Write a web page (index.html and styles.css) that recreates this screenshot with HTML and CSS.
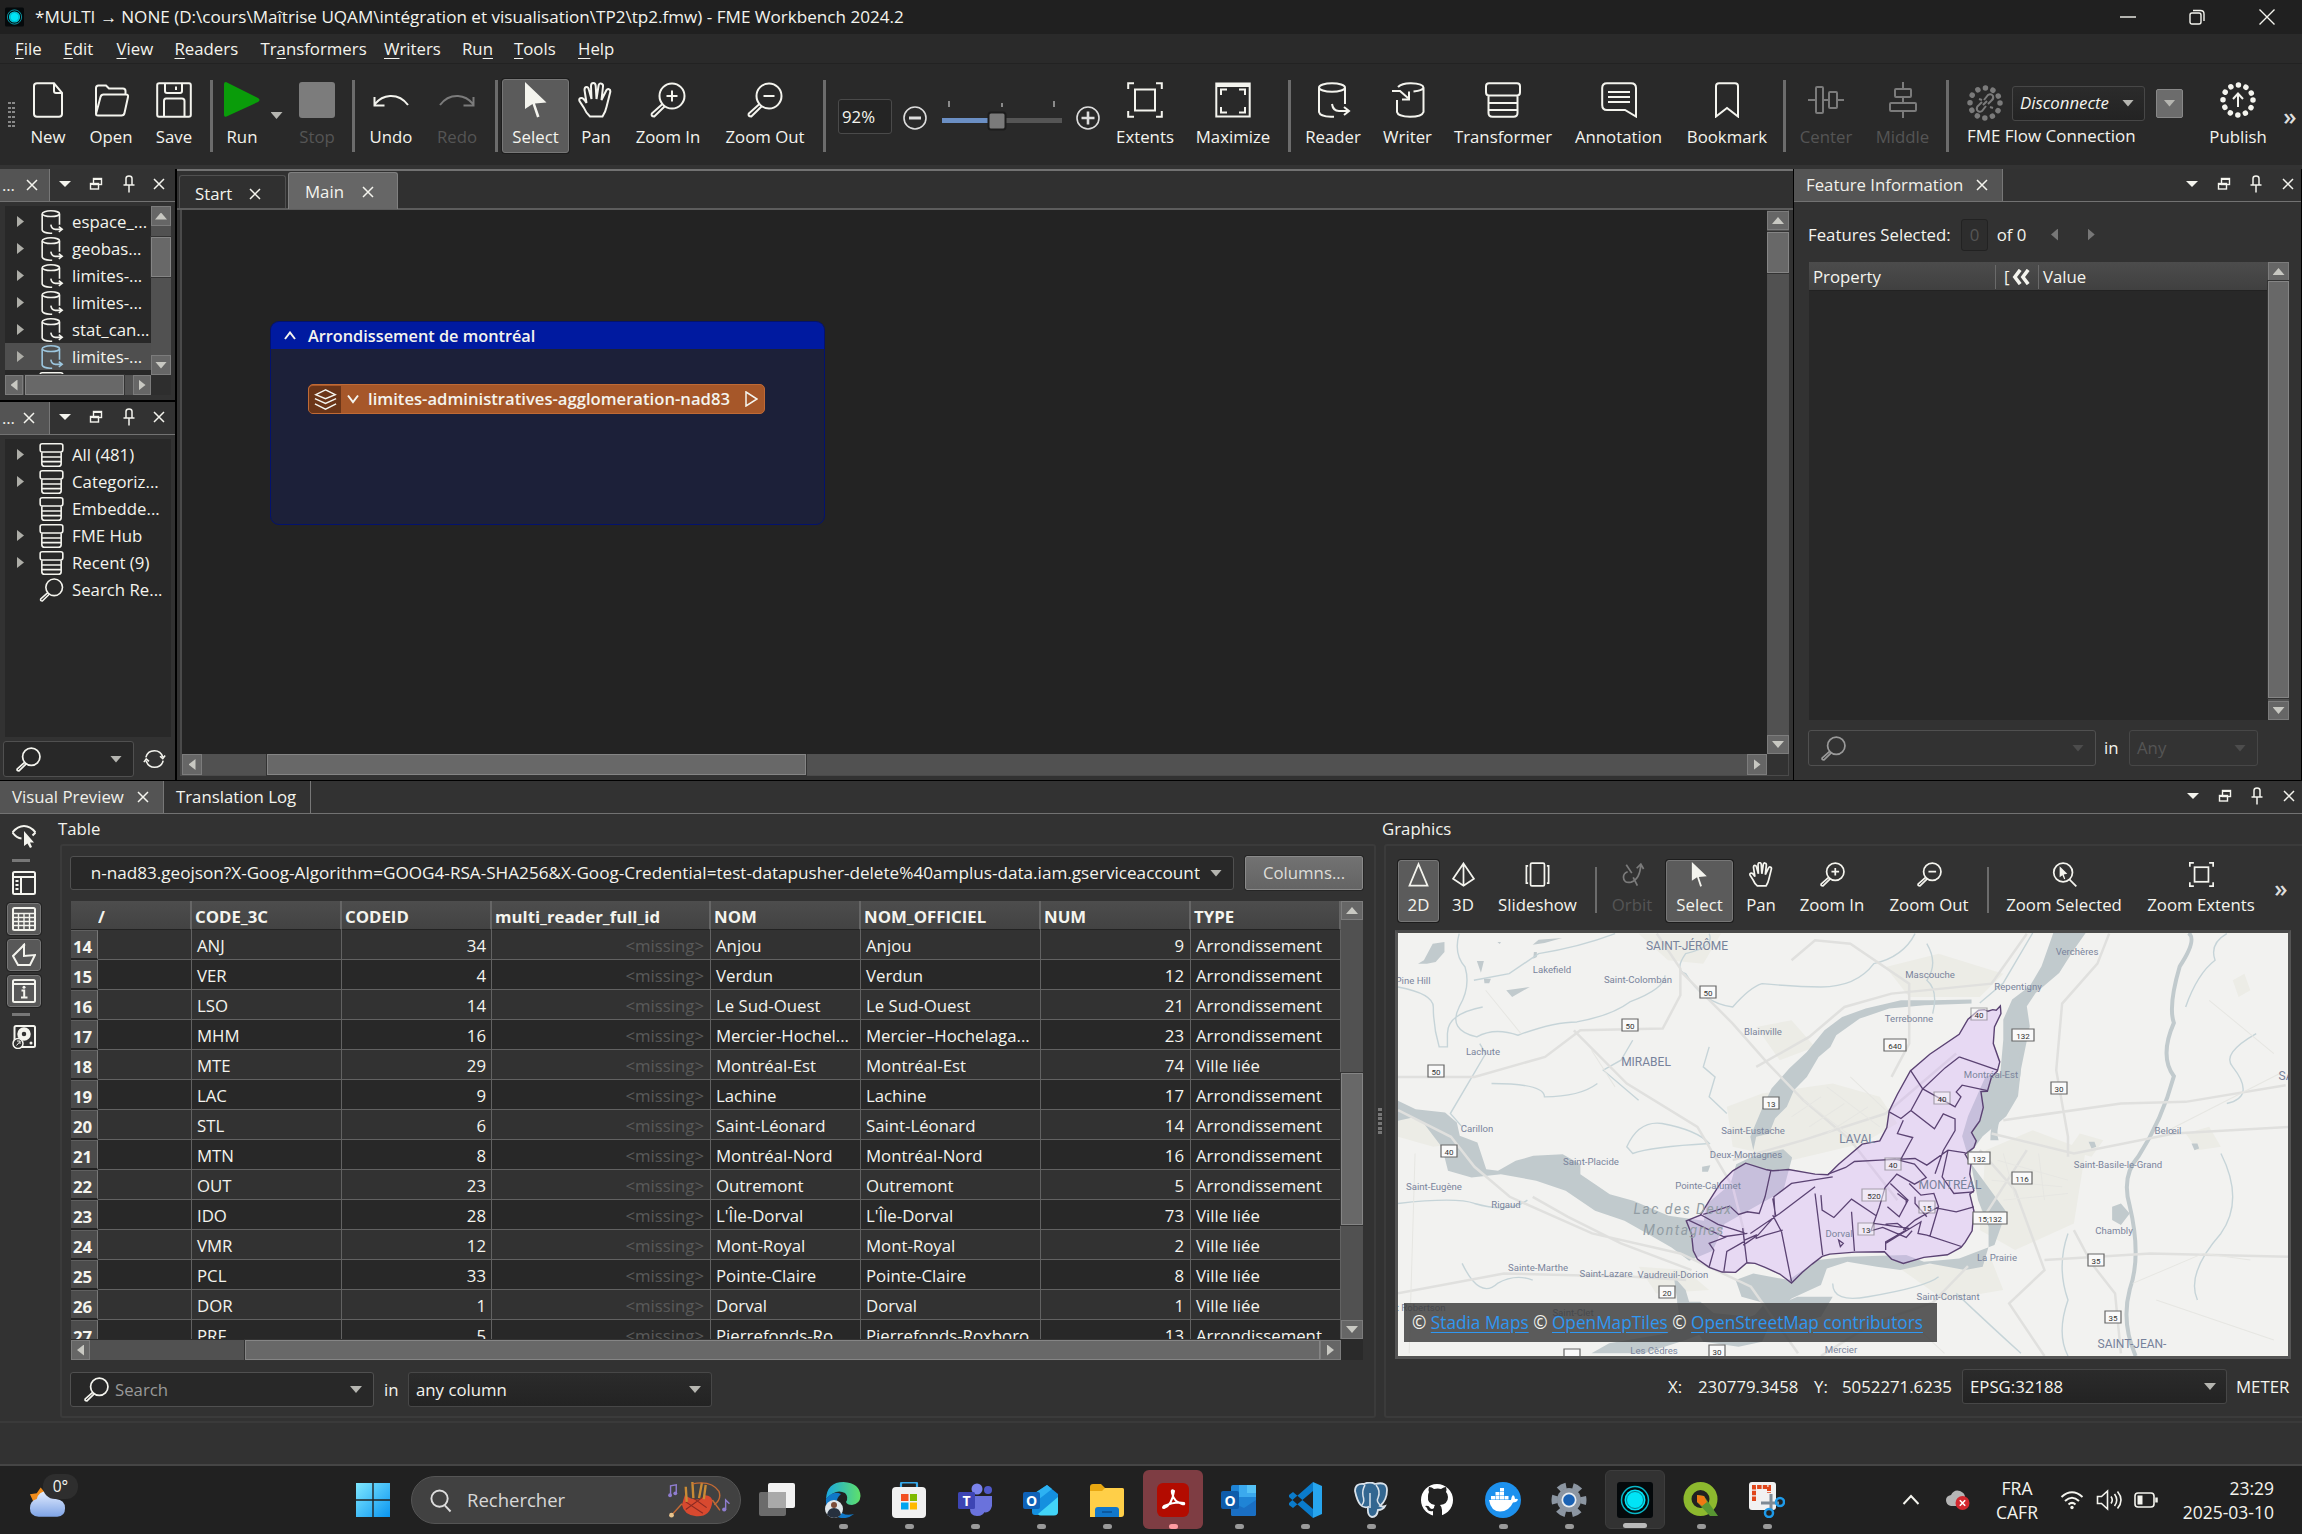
FILE: index.html
```html
<!DOCTYPE html>
<html lang="fr">
<head>
<meta charset="utf-8">
<title>FME Workbench</title>
<link rel="stylesheet" href="styles.css">
</head>
<body>
<svg class="defs" width="0" height="0">
  <defs>
  <symbol id="new" viewBox="0 0 36 36"><path d="M7 1.300h17l8 9.500V32q0 2.700-3 2.700H7q-3 0-3-2.700V4q0-2.700 3-2.700zM24 1.300V9q0 2 2 2h6"/></symbol>
  <symbol id="open" viewBox="0 0 36 36"><path d="M3 32V6q0-2.500 2.500-2.500H13l3 3h14q2.500 0 2.500 2.500v3M3 32l4.500-17q.7-2.500 3-2.500H33q2.500 0 2 2.500l-3.500 16q-.5 2.500-3 2.500H5Q3 33.500 3 32z"/></symbol>
  <symbol id="save" viewBox="0 0 36 36"><path d="M1.200 3q0-1.800 2-1.800H33q1.800 0 1.800 2V33q0 1.800-2 1.800H3q-1.800 0-1.800-2zM9 1.500V9q0 2 2 2h13q2 0 2-2V1.500M8 34V19q0-2.500 2-2.500h16q2.500 0 2.500 2.500v15M20 4.500V8"/></symbol>
  <symbol id="undo" viewBox="0 0 36 36"><path d="M35 23Q28 13.500 17 14 8 14.500 2 22M1.500 15v8.500h10"/></symbol>
  <symbol id="redo" viewBox="0 0 36 36"><path d="M1 23Q8 13.500 19 14q9 .5 15 8M34.500 15v8.500h-10"/></symbol>
  <symbol id="cursor" viewBox="0 0 36 36"><path class="solid" d="M7 0v27l7.500-5 4.500 13.500 2.500-1L17 21.500l11.500-1z"/></symbol>
  <symbol id="hand" viewBox="0 0 36 36"><path d="M12 34.500Q8 31 6 26L1.500 19q-1-3 2-3 2 0 5 5L6.500 8q0-3 2-3 2 0 2.500 3l2.500 9L13 4q0-3 2.300-3 2.300 0 2.400 3l.8 13L20.500 4q.5-3 2.500-2.500 2.300.5 2 3L23.500 18l4.500-9q1-2.500 3-1.700 2 .7 1 3.700L28.500 25q-1 5-4 9.500z"/></symbol>
  <symbol id="lens" viewBox="0 0 36 36"><circle cx="22" cy="14" r="12.500"/><path d="M12.500 22L1.800 31.500q-1 3 2.500 3L15 24"/></symbol>
  <symbol id="zin" viewBox="0 0 36 36"><circle cx="22" cy="14" r="12.500"/><path d="M12.500 22L1.800 31.500q-1 3 2.500 3L15 24M22 8.500v11M16.500 14h11"/></symbol>
  <symbol id="zout" viewBox="0 0 36 36"><circle cx="22" cy="14" r="12.500"/><path d="M12.500 22L1.800 31.500q-1 3 2.500 3L15 24M16.500 14h11"/></symbol>
  <symbol id="zsel" viewBox="0 0 36 36"><circle cx="16" cy="15" r="13.500"/><path d="M25 25l10 10"/><path class="solid" d="M11 6v16l4-3 2.500 6 1.500-.8L17 18l5-1z"/></symbol>
  <symbol id="extents" viewBox="0 0 36 36"><rect x="8" y="7.500" width="20" height="21"/><path d="M1.200 7V1.200H7M29 1.200h5.800V7M34.800 29v5.800H29M7 34.800H1.200V29"/></symbol>
  <symbol id="maximize" viewBox="0 0 36 36"><rect x="1.300" y="1.500" width="33.400" height="33"/><path d="M1 3h34" stroke-width="4"/><path d="M6 13V7.500h6M24 7.500h6V13M30 25v5.500h-6M12 30.500H6V25"/></symbol>
  <symbol id="reader" viewBox="0 0 36 36"><ellipse cx="17" cy="5.500" rx="13" ry="4.300"/><path d="M4 6v24q1 4.500 12 4.800h3M30 6v16M17 22q1 7 7 7h9M29 25l5 4-5 4"/></symbol>
  <symbol id="writer" viewBox="0 0 36 36"><path d="M8 5q4-4 13-3.800 12 .3 12.500 4.300-.5 3-10 4M7 18v12q1 4.500 13 4.800 12 0 13.500-4.800V6M2 9h8l8 7M12 17.500h7V9.500"/></symbol>
  <symbol id="transformer" viewBox="0 0 36 36"><path d="M4 1.200h28q3 0 3 3v6q0 3.300-3 3.300H4q-3 0-3-3.300v-6q0-3 3-3zM3.500 14v17q0 3.800 4 3.800h21q4 0 4-3.800V14M3.500 21h29M3.500 28h29"/></symbol>
  <symbol id="annotation" viewBox="0 0 36 36"><path d="M35 34.500V6q0-4.800-5-4.800H6Q1.200 1.200 1.200 6v17Q1.200 28 6 28h18zM7 10h22M7 15h22M7 20h22"/></symbol>
  <symbol id="bookmark" viewBox="0 0 36 36"><path d="M7 34.500V4q0-2.800 3-2.800h16q3 0 3 2.800v30.500l-11-8.500z"/></symbol>
  <symbol id="center" viewBox="0 0 36 36"><rect x="8" y="5" width="7" height="26" rx="1"/><rect x="21" y="10" width="8" height="16" rx="1"/><path d="M0 18h8M15 18h6M29 18h7"/></symbol>
  <symbol id="middle" viewBox="0 0 36 36"><rect x="10" y="7" width="16" height="8" rx="1"/><rect x="5" y="21" width="26" height="8" rx="1"/><path d="M18 0v7M18 15v6M18 29v7"/></symbol>
  <symbol id="ring" viewBox="0 0 36 36"><circle cx="18" cy="18" r="15" stroke-width="5.500" stroke-linecap="round" stroke-dasharray="0.010 7.844"/></symbol>
  <symbol id="x" viewBox="0 0 12 12"><path d="M1 1l10 10M11 1L1 11"/></symbol>
  <symbol id="restore" viewBox="0 0 14 14"><rect x="4.500" y="1.500" width="8" height="6"/><rect x="1.500" y="6.500" width="8" height="5.500"/><path d="M4.500 2h8.500M1.500 7h8.500" stroke-width="2"/></symbol>
  <symbol id="pin" viewBox="0 0 12 18"><path d="M3 9.500V3.500q0-2.500 3-2.500t3 2.500v6M0.500 10h11M6 10v7.500"/></symbol>
  <symbol id="two" viewBox="0 0 36 36"><path d="M18 3l13 31H5z"/></symbol>
  <symbol id="three" viewBox="0 0 36 36"><path d="M18 2l15 22-15 10L3 24zM18 2v32"/></symbol>
  <symbol id="slides" viewBox="0 0 36 36"><rect x="8" y="1.500" width="20" height="33" rx="2"/><path d="M4.500 5.500H2v25h2.500M31.500 5.500H34v25h-2.500"/></symbol>
  <symbol id="orbit" viewBox="0 0 36 36"><path d="M30 3q-1 22-14 26Q5 31 5 22q0-6 6-8M24 9l6-6 4 7M9 4l8 12M19 22l6 12"/></symbol>
  <symbol id="refresh" viewBox="0 0 28 28"><path d="M3 12q2-8.500 11-8.500 8 0 10.500 8M25 16q-2 8.500-11 8.500-8 0-10.500-8M21 10.500l3.500 3 3-4M.5 18l3-4 3.500 3"/></symbol>
  <symbol id="fme" viewBox="0 0 36 36"><rect width="36" height="36" rx="3" fill="#05090b"/><circle cx="18" cy="18" r="10.500" fill="#00e4f6"/><circle cx="18" cy="18" r="13.500" fill="none" stroke="#0ab6c6" stroke-width="1.500"/><circle cx="18" cy="18" r="8.500" fill="none" stroke="#067e8c" stroke-width="1"/></symbol>
  <linearGradient id="winb" x2="1" y2="1"><stop offset="0" stop-color="#7fe8ff"/><stop offset="1" stop-color="#0a95f0"/></linearGradient>
  <linearGradient id="edgeg" x2="1"><stop offset="0" stop-color="#1aa7e0"/><stop offset="1" stop-color="#5fe06a"/></linearGradient>
  <linearGradient id="cloudg" x2="0" y2="1"><stop offset="0" stop-color="#e3edff"/><stop offset="1" stop-color="#7fa4e6"/></linearGradient>
  </defs>
</svg>

<header class="title"><svg class="i18"><use href="#fme"/></svg><span>*MULTI → NONE (D:\cours\Maîtrise UQAM\intégration et visualisation\TP2\tp2.fmw) - FME Workbench 2024.2</span>
  <div class="winctl">
    <svg viewBox="0 0 16 16"><path d="M0 8h16"/></svg>
    <svg viewBox="0 0 16 16"><rect x="1" y="4" width="11" height="11" rx="2"/><path d="M4 1.500h7.500Q15 1.500 15 5v7"/></svg>
    <svg viewBox="0 0 16 16"><path d="M.5.5l15 15M15.500.5l-15 15"/></svg>
  </div>
</header>
<nav class="menu"><span><u>F</u>ile</span><span><u>E</u>dit</span><span><u>V</u>iew</span><span><u>R</u>eaders</span><span>Tr<u>a</u>nsformers</span><span><u>W</u>riters</span><span>Ru<u>n</u></span><span><u>T</u>ools</span><span><u>H</u>elp</span></nav>

<div class="toolbar">
  <div class="grip"></div>
  <div class="tool"><svg><use href="#new"/></svg>New</div>
  <div class="tool"><svg><use href="#open"/></svg>Open</div>
  <div class="tool"><svg><use href="#save"/></svg>Save</div>
  <i class="sep"></i>
  <div class="tool"><svg viewBox="0 0 36 36"><path class="run" d="M2 0Q0 0 0 2v31q0 2.500 2.500 1.500L34 20q3-2 0-4z"/></svg>Run</div>
  <i class="drop run-drop"></i>
  <div class="tool off"><b class="stop"></b>Stop</div>
  <i class="sep"></i>
  <div class="tool"><svg><use href="#undo"/></svg>Undo</div>
  <div class="tool off"><svg><use href="#redo"/></svg>Redo</div>
  <i class="sep"></i>
  <div class="tool on"><svg><use href="#cursor"/></svg>Select</div>
  <div class="tool"><svg><use href="#hand"/></svg>Pan</div>
  <div class="tool"><svg><use href="#zin"/></svg>Zoom In</div>
  <div class="tool"><svg><use href="#zout"/></svg>Zoom Out</div>
  <i class="sep"></i>
  <div class="pct">92%</div>
  <svg class="pm" viewBox="0 0 24 24"><circle cx="12" cy="12" r="11"/><path d="M6 12h12" stroke-width="3"/></svg>
  <svg class="slider" viewBox="0 0 130 40"><path d="M12 4v6M65 6v4M117 4v6" stroke="#aaa" stroke-width="1.500"/><rect x="5" y="21" width="50" height="5" fill="#6b8fc4"/><rect x="55" y="21" width="70" height="5" fill="#555"/><rect x="51.500" y="15.500" width="17" height="17" rx="2.500" fill="#7a7a7a" stroke="#1c1c1c"/></svg>
  <svg class="pm" viewBox="0 0 24 24"><circle cx="12" cy="12" r="11"/><path d="M5.500 12h13M12 5.500v13" stroke-width="2.600"/></svg>
  <div class="tool"><svg><use href="#extents"/></svg>Extents</div>
  <div class="tool"><svg><use href="#maximize"/></svg>Maximize</div>
  <i class="sep"></i>
  <div class="tool"><svg><use href="#reader"/></svg>Reader</div>
  <div class="tool"><svg><use href="#writer"/></svg>Writer</div>
  <div class="tool"><svg><use href="#transformer"/></svg>Transformer</div>
  <div class="tool"><svg><use href="#annotation"/></svg>Annotation</div>
  <div class="tool"><svg><use href="#bookmark"/></svg>Bookmark</div>
  <i class="sep"></i>
  <div class="tool off"><svg><use href="#center"/></svg>Center</div>
  <div class="tool off"><svg><use href="#middle"/></svg>Middle</div>
  <i class="sep"></i>
  <div class="flow">
    <div class="flow-row"><svg class="flow-ico" viewBox="0 0 36 36"><use href="#ring"/><path d="M17 15l4-5q3-2 5 1 1 3-2 5l-3 3M19 21l-4 5q-3 2-5-1-1-3 2-5l3-3M12 14l3 1M23 22l3 1M16 20l4-4"/></svg>
      <div class="combo flow-combo"><em>Disconnecte</em><i class="drop"></i></div><div class="flow-btn"><i class="drop"></i></div></div>
    <span>FME Flow Connection</span>
  </div>
  <div class="tool"><svg viewBox="0 0 36 36"><use href="#ring"/><path d="M18 25V12M13 17l5-5.500 5 5.500"/></svg>Publish</div>
  <div class="more">»</div>
</div>

<main class="work">
  <aside class="left">
    <section class="dock one">
      <div class="dockbar"><div class="dtab"><span>...</span><svg class="x"><use href="#x"/></svg></div><div class="acts"><i class="drop"></i><svg class="r"><use href="#restore"/></svg><svg class="p"><use href="#pin"/></svg><svg class="x"><use href="#x"/></svg></div></div>
      <div class="treebox">
        <div class="tree">
          <div><i class="exp"></i><svg><use href="#reader"/></svg>espace_...</div>
          <div><i class="exp"></i><svg><use href="#reader"/></svg>geobas...</div>
          <div><i class="exp"></i><svg><use href="#reader"/></svg>limites-...</div>
          <div><i class="exp"></i><svg><use href="#reader"/></svg>limites-...</div>
          <div><i class="exp"></i><svg><use href="#reader"/></svg>stat_can...</div>
          <div class="sel"><i class="exp"></i><svg><use href="#reader"/></svg>limites-...</div>
          <div><i></i><svg><use href="#transformer"/></svg></div>
        </div>
        <div class="vsb s1"><b class="up"></b><s></s><b class="down"></b></div>
        <div class="hsb h1"><b class="lt"></b><s></s><b class="rt"></b></div>
      </div>
    </section>
    <section class="dock two">
      <div class="dockbar"><div class="dtab"><span>...</span><svg class="x"><use href="#x"/></svg></div><div class="acts"><i class="drop"></i><svg class="r"><use href="#restore"/></svg><svg class="p"><use href="#pin"/></svg><svg class="x"><use href="#x"/></svg></div></div>
      <div class="tree gallery">
        <div><i class="exp"></i><svg><use href="#transformer"/></svg>All (481)</div>
        <div><i class="exp"></i><svg><use href="#transformer"/></svg>Categoriz...</div>
        <div><i></i><svg><use href="#transformer"/></svg>Embedde...</div>
        <div><i class="exp"></i><svg><use href="#transformer"/></svg>FME Hub</div>
        <div><i class="exp"></i><svg><use href="#transformer"/></svg>Recent (9)</div>
        <div><i></i><svg><use href="#lens"/></svg>Search Re...</div>
      </div>
      <div class="gsearch"><div class="field"><svg class="mag"><use href="#lens"/></svg><i class="drop"></i></div><svg class="ref"><use href="#refresh"/></svg></div>
    </section>
  </aside>
  <section class="mid">
    <div class="tabs"><div class="tab start">Start<svg class="x"><use href="#x"/></svg></div><div class="tab cur">Main<svg class="x"><use href="#x"/></svg></div></div>
    <div class="cwrap">
      <div class="canvas">
        <div class="bm"><div class="bmh"><svg viewBox="0 0 12 10"><path d="M1 8l5-6.500L11 8"/></svg>Arrondissement de montréal</div>
          <div class="node"><span class="nico"><svg viewBox="0 0 26 26"><path d="M13 2L2 7.500 13 12l11-4.500zM1 12l12 5.500L25 12M1 18l12 6 12-6"/></svg></span><svg class="chev" viewBox="0 0 12 10"><path d="M1 1.500L6 8l5-6.500"/></svg><span class="nname">limites-administratives-agglomeration-nad83</span><svg class="port" viewBox="0 0 13 16"><path d="M1 1l11 7-11 7z"/></svg></div>
        </div>
      </div>
      <div class="vsb s2"><b class="up"></b><s></s><b class="down"></b></div>
      <div class="hsb h2"><b class="lt"></b><s></s><b class="rt"></b></div>
    </div>
  </section>
  <aside class="right">
    <div class="dockbar"><div class="dtab"><span>Feature Information</span><svg class="x"><use href="#x"/></svg></div><div class="acts"><i class="drop"></i><svg class="r"><use href="#restore"/></svg><svg class="p"><use href="#pin"/></svg><svg class="x"><use href="#x"/></svg></div></div>
    <div class="fsel"><span>Features Selected:</span><div class="fbox">0</div><span>of 0</span><i class="exp back"></i><i class="exp"></i></div>
    <div class="props"><div class="phead"><span>Property</span><span class="pk">[<svg viewBox="0 0 21 18"><path d="M9 1L3 9l6 8M18 1l-6 8 6 8"/></svg></span><span>Value</span></div><div class="pbody"></div><div class="vsb s3"><b class="up"></b><s></s><b class="down"></b></div></div>
    <div class="fsearch"><div class="field"><svg class="mag"><use href="#lens"/></svg><i class="drop"></i></div><span>in</span><div class="combo any">Any<i class="drop"></i></div></div>
  </aside>
</main>

<section class="preview">
  <div class="dockbar"><div class="dtab"><span>Visual Preview</span><svg class="x"><use href="#x"/></svg></div><div class="dtab2">Translation Log</div><div class="acts"><i class="drop"></i><svg class="r"><use href="#restore"/></svg><svg class="p"><use href="#pin"/></svg><svg class="x"><use href="#x"/></svg></div></div>
  <div class="pv">
    <div class="side">
      <svg viewBox="0 0 24 24"><path d="M.5 8.500q5-6.500 11.500-6.500t11.500 6.500M.5 8.500q4 5.500 9 6M23.500 8.500l-3 3"/><path class="solid" d="M12 7v15l3.500-2.500L18 24l2-1-2-4.500h4z"/></svg>
      <i class="dash"></i>
      <svg viewBox="0 0 24 24"><rect x="1" y="1" width="22" height="22" rx="1.500"/><path d="M1 6h22M9 6v17M3.500 10h3M3.500 14h3M3.500 18h3"/></svg>
      <div class="sbtn"><svg viewBox="0 0 24 24"><rect x="1" y="1" width="22" height="22" rx="1.500"/><path d="M1 6.500h22M1 10.500h22M1 14.500h22M1 18.500h22M6.500 6v17M12 6v17M17.500 6v17" stroke-width="1.400"/></svg></div>
      <div class="sbtn"><svg viewBox="0 0 24 24"><path d="M12 2L1 13l5 9h12l5-10-11 1z"/><circle cx="12" cy="2" r="1.300" class="solid"/></svg></div>
      <div class="sbtn"><svg viewBox="0 0 24 24"><rect x="1" y="1" width="22" height="22" rx="1.500"/><path d="M1 5h22M9.500 11.500h2.700v7M9 18.500h6.500"/><circle cx="12" cy="8.200" r="1.500" class="solid"/></svg></div>
      <i class="dash"></i>
      <svg viewBox="0 0 24 24"><rect x="2.500" y="1" width="20.500" height="21" rx="1.500"/><circle cx="12" cy="9" r="4.500" stroke-width="4.500"/><circle cx="19" cy="18" r="1.500" class="solid"/><circle cx="6" cy="18.500" r="5" fill="#323232" stroke-width="1.500"/><path d="M4.500 20.500l3.500-4M5 16h3v3" stroke-width="1"/></svg>
    </div>
    <div class="tcol">
      <h3>Table</h3>
      <div class="gbox">
        <div class="urlrow"><div class="field url"><span>n-nad83.geojson?X-Goog-Algorithm=GOOG4-RSA-SHA256&amp;X-Goog-Credential=test-datapusher-delete%40amplus-data.iam.gserviceaccount</span><i class="drop"></i></div><div class="btn">Columns...</div></div>
        <div class="grid">
          <div class="rows">
            <div class="row hd"><span></span><span>/</span><span>CODE_3C</span><span>CODEID</span><span>multi_reader_full_id</span><span>NOM</span><span>NOM_OFFICIEL</span><span>NUM</span><span>TYPE</span></div>
            <div class="row"><b>14</b><span></span><span>ANJ</span><span>34</span><span>&lt;missing&gt;</span><span>Anjou</span><span>Anjou</span><span>9</span><span>Arrondissement</span></div>
            <div class="row"><b>15</b><span></span><span>VER</span><span>4</span><span>&lt;missing&gt;</span><span>Verdun</span><span>Verdun</span><span>12</span><span>Arrondissement</span></div>
            <div class="row"><b>16</b><span></span><span>LSO</span><span>14</span><span>&lt;missing&gt;</span><span>Le Sud-Ouest</span><span>Le Sud-Ouest</span><span>21</span><span>Arrondissement</span></div>
            <div class="row"><b>17</b><span></span><span>MHM</span><span>16</span><span>&lt;missing&gt;</span><span>Mercier-Hochel...</span><span>Mercier–Hochelaga...</span><span>23</span><span>Arrondissement</span></div>
            <div class="row"><b>18</b><span></span><span>MTE</span><span>29</span><span>&lt;missing&gt;</span><span>Montréal-Est</span><span>Montréal-Est</span><span>74</span><span>Ville liée</span></div>
            <div class="row"><b>19</b><span></span><span>LAC</span><span>9</span><span>&lt;missing&gt;</span><span>Lachine</span><span>Lachine</span><span>17</span><span>Arrondissement</span></div>
            <div class="row"><b>20</b><span></span><span>STL</span><span>6</span><span>&lt;missing&gt;</span><span>Saint-Léonard</span><span>Saint-Léonard</span><span>14</span><span>Arrondissement</span></div>
            <div class="row"><b>21</b><span></span><span>MTN</span><span>8</span><span>&lt;missing&gt;</span><span>Montréal-Nord</span><span>Montréal-Nord</span><span>16</span><span>Arrondissement</span></div>
            <div class="row"><b>22</b><span></span><span>OUT</span><span>23</span><span>&lt;missing&gt;</span><span>Outremont</span><span>Outremont</span><span>5</span><span>Arrondissement</span></div>
            <div class="row"><b>23</b><span></span><span>IDO</span><span>28</span><span>&lt;missing&gt;</span><span>L'Île-Dorval</span><span>L'Île-Dorval</span><span>73</span><span>Ville liée</span></div>
            <div class="row"><b>24</b><span></span><span>VMR</span><span>12</span><span>&lt;missing&gt;</span><span>Mont-Royal</span><span>Mont-Royal</span><span>2</span><span>Ville liée</span></div>
            <div class="row"><b>25</b><span></span><span>PCL</span><span>33</span><span>&lt;missing&gt;</span><span>Pointe-Claire</span><span>Pointe-Claire</span><span>8</span><span>Ville liée</span></div>
            <div class="row"><b>26</b><span></span><span>DOR</span><span>1</span><span>&lt;missing&gt;</span><span>Dorval</span><span>Dorval</span><span>1</span><span>Ville liée</span></div>
            <div class="row"><b>27</b><span></span><span>PRF</span><span>5</span><span>&lt;missing&gt;</span><span>Pierrefonds-Ro...</span><span>Pierrefonds-Roxboro</span><span>13</span><span>Arrondissement</span></div>
          </div>
          <div class="vsb s4"><b class="up"></b><s></s><b class="down"></b></div>
          <div class="hsb h4"><b class="lt"></b><s></s><b class="rt"></b></div>
        </div>
        <div class="tsearch"><div class="field"><svg class="mag"><use href="#lens"/></svg><span>Search</span><i class="drop"></i></div><span>in</span><div class="combo">any column<i class="drop"></i></div></div>
      </div>
    </div>
    <div class="split"></div>
    <div class="gcol">
      <h3>Graphics</h3>
      <div class="gbox2">
        <div class="gtools">
          <div class="tool on"><svg><use href="#two"/></svg>2D</div>
          <div class="tool"><svg><use href="#three"/></svg>3D</div>
          <div class="tool"><svg><use href="#slides"/></svg>Slideshow</div>
          <i class="sep"></i>
          <div class="tool off"><svg><use href="#orbit"/></svg>Orbit</div>
          <i></i>
          <div class="tool on"><svg><use href="#cursor"/></svg>Select</div>
          <div class="tool"><svg><use href="#hand"/></svg>Pan</div>
          <div class="tool"><svg><use href="#zin"/></svg>Zoom In</div>
          <div class="tool"><svg><use href="#zout"/></svg>Zoom Out</div>
          <i class="sep"></i>
          <div class="tool"><svg><use href="#zsel"/></svg>Zoom Selected</div>
          <div class="tool"><svg><use href="#extents"/></svg>Zoom Extents</div>
          <div class="more">»</div>
        </div>
        <div class="map">
          <svg class="base" viewBox="31 398 1513 1270" preserveAspectRatio="none">
            <rect x="31" y="398" width="1513" height="1270" fill="#f2f2f0"/>
            <g class="urban"><path d="M590 920l60-40 120-30 80 40 30 80-60 60-120 50-100-40zM860 500l90-40 110 60-40 70-120 0zM1030 1050l80-60 90 60-20 220-100 80-60-60zM440 400l140 0-30 90-60-10zM640 680l60-20 40 80-60 40zM880 1400l160-20 20 90-100 30zM440 1400l80 10 40 60-90 10zM1190 1000l40 20-20 50-40-20zM1370 1000l40-20 20 60-40 10zM1450 540l20-20 10 50-20 20zM31 940l60 40 40 50-40 10-60-30z"/></g>
            <g class="water">
              <path d="M1145 398h55l-20 50-25 70-40 60-15 40 5 60-15 130-5 80-20 60-40 60-25 60-10-60 10-60 15-60 15-60 25-10 5-100 0-60 15-60 30-40 20-60z"/>
              <path d="M1072 720q30 60 10 150-40 100-30 150l-14 0q0-80 28-160 10-80 0-140z"/>
              <path d="M1005 1090l12 110 18 80 0 60-10 60-30 10-60-20-50 20-40-10-50-15-35 20-10 50-50 40-30 50-20 80-40 15-60-15-20-60-25-60 40 0 30 45 60 0 20-40-40-20-10-50 30-20 60 20 50-60 50-10 100-5 30 20 60-10 60-40 20-100z"/>
              <path d="M31 902l30 25 50 10 20 30 5 40 30 20 15 80 20 5 30-30 30-15 50-5 30 30 0 30 50 60 40 20 60 45 60 15 5-50 40-60 10-60 30-25 50-20 15 25-15 100-60 60-40 40-20 80-40 30-30-40-40-40-40-40-50-30-50-60-50-30-60-20-50 10-40-20-10-70-30-70-20-20-25 10-20-60z"/>
              <path d="M500 1430l20 40 10 60 40 10 60 10 80-60 60 0-20 60-60 30-80 10-60 10-30 20-70 40h-90l30-30 100-30 20-40z"/>
              <path d="M630 1010l5 40 5-40 22-10 10-45 20-35 12-50 22-40 20-60 20-30 10-35 40-50 50-30 60-10 80-5 0-12-70 2-50 0-60 25-40 25-30 40-30 65-30 50-30 60-16 60-12 50z"/>
              <path d="M110 425l-20 5-15 50-10 10 15 0 15-5 15-30zM270 418l40-5-30 15-20 5zM165 482l12 0-5 35zM215 570l40-10-30 30zM177 535l12 0-3 14-8 0zM262 455l5 0 0 15-6 5zM200 425l6 0-2 6zM1245 1220l15-10 15 30-15 35-15-15zM1205 1025l10 0 3 15-8 5zM1380 1030l10 0 3 15-8 5zM548 1100l14-5-4 20-10 0z"/>
              <path class="wl" d="M1375 398q15 20-15 100-20 120-10 170-25 100 0 160-20 130-60 240-30 60-15 150 20 150 0 250-15 100 10 200"/>
            </g>
            <g class="stream"><path d="M135 400q-10 60 10 100 10 60-10 120-20 70 30 90 30-30 70-5 60-40 100-40 60-20 90-60 60-40 60-80M31 560q60 20 60 60 0 60 10 120l14 0 0-40q0-60 60-80M170 730l10 30-20 60-40 120 20 40M560 400q10 40-40 60-20 50 0 60 30 90 80 100 30-60 50-70 60 10 100 10 60 0 90-70 50-20 70-90M430 720l-20 60-30 30 60 90M190 850q90 0 90 40 60 0 90-40M420 1040q20-80 60-70 60 20 80 60-100 10-130 30zM1440 400q-30 30-20 80-30 40-50 140M1490 700q-60 60-40 100 40 90-10 110M1430 1060q40 140 0 240-60 120-40 200M1170 1300q-20 100 0 200-20 100 0 168M140 1390q30 110 60 60 30-30 60-10M31 1210q100-20 130 0 60 30 90-10M770 1450q0 60 60 40 100-30 120-60M980 1480q60 100 110 180M400 400q-60 40-130 60l-50 60-60 20M560 740l-10 60 20 30-10 60 30 50M930 430q20 60 0 110 20 30 10 100M1110 398l-50 150-40 60"/></g>
            <g class="road"><path d="M31 830l130 0 120-60 60-80 140-5 30-100 0-80-40-105M510 510l90 160 60 120 60 110 80 120 80 180M330 690l90 160 120 130 60 180 20 140M640 800l90-90 60-90 80-40 170-30 60-150M700 480l40-60 60 10 100 120 0 180-30 100M1240 400l-20 90-60 120-10 200 20 200 0 60M1060 960l200-50 110-5 170-50M1040 1000l140 60 170-60 200-20M1020 1050l60 120 50 240-60 100 60 158M1100 1050l-80 220M1130 1380l180-20 240 10M1180 1290l30 100 40 90 10 180M31 930l90 80 40 90 60 90 140 110 150 60 120 100 80 200M260 1190l60 60 90 80 120 80M31 1480l180-60 220 10 90 10M750 1668l90-100 100-60 60-110M600 1080l120-60 140-80 120-180"/></g>
            <g class="minor"><path d="M700 950l50-60M730 980l60-70M760 1000l70-80M720 900l90 120M760 860l90 120M800 830l60 100M1050 1080l120 60M1040 1140l120 20M1060 1200l110-20M1060 1060l20 130M1120 1060l10 140M1330 1000l200-180M1280 1450l120-90 80 20M240 700l-60-130M360 750l40 110M60 1060l-10 600M900 1560l60 100M1320 1500l200 120M1410 600l110 160"/></g>
            <path class="isl" d="M1018 630l10-2 6 5 8-5 6 2 7-13 1 23-11 40-2 50 11 55-4 27-10 18-7 43-11 1 4 48-6 40-8 20-6 15 8 25-4 20-15 20 10 30-2 30 7 50-7 10 7 50-3 60-12 35-7 15-23 22-40 8-35 18-20-13-12-22-50 1-43 6-13 7-17 23-17 25-18 32-20-27-25-20-17-12-14-2-19 29-23-1-22-14-20-25-7-25-3-50-9-40 24-17 15-43 20-55 20-35 22-23 36 20 10 3 27-4 45 14 22 2 18-32 20-30 20-30 30-10 12-40 4-50 14-50 22-70 33-50 50-60 15-45z"/>
            <g class="bor"><path d="M985 770l65 40M985 770l-24 33-38 63-21-56M923 866l55 54 10-30-8-15 10-20 43 16M923 866l-20 65 40 55 15-45 20 15 0 35-20 60-14 70M866 935l20 20 17-24M890 960l-10 40 26 12-20 65M850 1080l60-5 20 20 36-45 30 8M966 1050l-10 80 20 50 34-5M762 1122l30-20 15-18 43-4 26-3 33 15 20 40-20 20-30-30-20 40-10 60-14 70 20-10 40 30 10-20M770 1130l-70 20-30 40 2 55M665 1110l-10 80-10 50-20-5-15 8-15-25-45 25M545 1243l30 30 45 25M525 1260l60 50 40-10M668 1195l5 50-30 60-25 30M740 1160l-60 80-50 60M668 1245l15 50 17 150M740 1180l13 185M750 1185l2 45 20 22 30-55 42 50M802 1235l5 118M585 1414l5-60 30-30-3-40M560 1400l8-50-8-20 30-20M618 1300l6 86M620 1320l20-15 0 10 15-10 30-15M868 1150l30 50-15 50-20-30M900 1150l20 35 22-5 8 40-40 40-20 30M910 1190l0 20 20 40M860 1330l60-65-5 35 15 5 60 35M950 1220l-15 90M950 1225l30 10 30-15M860 1350l0-25 35-35-15-20-20 2M780 1320l8 10-5 10zM840 1270l60 15M880 1180l15 20 0 10"/></g>
          </svg>
          <svg class="labels" viewBox="0 0 890 423">
            <g class="town"><text x="154" y="40">Lakefield</text><text x="15" y="51">Pine Hill</text><text x="240" y="50">Saint-Colomban</text><text x="532" y="45">Mascouche</text><text x="679" y="22">Verchères</text><text x="620" y="57">Repentigny</text><text x="511" y="89">Terrebonne</text><text x="365" y="102">Blainville</text><text x="85" y="122">Lachute</text><text x="593" y="145">Montréal-Est</text><text x="79" y="199">Carillon</text><text x="355" y="201">Saint-Eustache</text><text x="348" y="225">Deux-Montagnes</text><text x="193" y="232">Saint-Placide</text><text x="310" y="256">Pointe-Calumet</text><text x="36" y="257">Saint-Eugène</text><text x="108" y="275">Rigaud</text><text x="441" y="304">Dorval</text><text x="770" y="201">Belœil</text><text x="720" y="235">Saint-Basile-le-Grand</text><text x="716" y="301">Chambly</text><text x="599" y="328">La Prairie</text><text x="140" y="338">Sainte-Marthe</text><text x="208" y="344">Saint-Lazare</text><text x="275" y="345">Vaudreuil-Dorion</text><text x="550" y="367">Saint-Constant</text><text x="175" y="383">Saint-Clet</text><text x="20" y="378">nt Robertson</text><text x="256" y="421">Les Cèdres</text><text x="443" y="420">Mercier</text></g>
            <g class="city"><text x="289" y="17">SAINT-JÉRÔME</text><text x="248" y="133">MIRABEL</text><text x="459" y="210">LAVAL</text><text x="552" y="256">MONTRÉAL</text><text x="734" y="415">SAINT-JEAN-</text><text x="888" y="147">SA</text></g>
            <g class="lake"><text x="285" y="281">Lac des Deux</text><text x="286" y="302">Montagnes</text></g>
            <g class="shield"><path d="M302 53h16v12h-16zM224 86h16v12h-16zM30 132h16v12H30zM365 164h16v12h-16zM486 106h22v12h-22zM614 96h22v12h-22zM653 149h16v12h-16zM43 212h16v12H43zM261 353h16v12h-16zM311 412h16v12h-16zM166 416h16v12h-16zM570 219h22v12h-22zM614 239h20v12h-20zM575 279h34v12h-34zM690 321h16v12h-16zM707 378h16v12h-16z"/><path opacity=".5" d="M573 75h16v12h-16zM536 159h16v12h-16zM487 225h16v12h-16zM464 256h24v12h-24zM460 290h16v12h-16zM521 268h16v12h-16z"/>
              <text x="310" y="62.500">50</text><text x="232" y="95.500">50</text><text x="38" y="141.500">50</text><text x="373" y="173.500">13</text><text x="497" y="115.500">640</text><text x="625" y="105.500">132</text><text x="661" y="158.500">30</text><text x="51" y="221.500">40</text><text x="269" y="362.500">20</text><text x="319" y="421.500">30</text><text x="581" y="228.500">132</text><text x="624" y="248.500">116</text><text x="592" y="288.500">15;132</text><text x="698" y="330.500">35</text><text x="715" y="387.500">35</text><text x="581" y="84.500">40</text><text x="544" y="168.500">40</text><text x="495" y="234.500">40</text><text x="476" y="265.500">520</text><text x="468" y="299.500">13</text><text x="529" y="277.500">15</text></g>
          </svg>
          <div class="attr">© <u>Stadia Maps</u> © <u>OpenMapTiles</u> © <u>OpenStreetMap contributors</u></div>
        </div>
        <div class="coords"><span>X:</span><span>230779.3458</span><span>Y:</span><span>5052271.6235</span><div class="combo">EPSG:32188<i class="drop"></i></div><span>METER</span></div>
      </div>
    </div>
  </div>
</section>
<div class="status"></div>

<footer class="taskbar">
  <div class="weather"><svg viewBox="0 0 40 32"><path d="M2 8l7-1 4-6 5 6 5 14H8z" fill="#f08c1c"/><path d="M11 31Q2 31 2 22.500 2 15 9 13q2-8 10-8 8 0 9.500 8Q38 14 38 22.500 38 31 30 31z" fill="url(#cloudg)"/></svg><span>0°</span></div>
  <div class="app"><svg viewBox="0 0 36 36"><path fill="url(#winb)" d="M1 1h16.300v16.300H1zM18.700 1H35v16.300H18.700zM1 18.700h16.300V35H1zM18.700 18.700H35V35H18.700z"/></svg></div>
  <div class="search"><svg class="sm" viewBox="0 0 24 24"><circle cx="11" cy="10" r="8.500"/><path d="M16.500 17l6 6.500"/></svg><span>Rechercher</span><svg class="pipes" viewBox="0 0 66 40"><path d="M17 15q14 9 21 0 8 0 8 7-2 16-17 15-13-1-15-12z" fill="#d8492f"/><path d="M18 22l18 12M26 18l14 10M36 17L18 30" stroke="#8a2a22" stroke-width="1.200"/><path d="M19 22L18 6M26 18L25 1M32 18l3-16M37 19l2-15" stroke="#c98b35" stroke-width="2.500" fill="none"/><path d="M25 3q20-4 28 8 3 8-5 14M14 24L3 36M46 20l8 11" stroke="#c26a35" stroke-width="1.500" fill="none"/><path d="M2 15V5l6-1v9" stroke="#8f7dd0" stroke-width="1.500" fill="none"/><circle cx="1.500" cy="15" r="2" fill="#8f7dd0"/><circle cx="7" cy="13" r="2" fill="#8f7dd0"/><path d="M60 30V20l4 4" stroke="#8f7dd0" stroke-width="1.500" fill="none"/><circle cx="58.500" cy="30" r="2.200" fill="#8f7dd0"/><circle cx="3" cy="36" r="2.500" fill="#e9c38c"/></svg></div>
  <div class="app gapl"><svg viewBox="0 0 36 36"><rect x="0" y="10" width="27" height="24" rx="2" fill="#6b6b6b"/><rect x="9" y="1" width="27" height="25" rx="2" fill="#f2f2f2"/><path d="M9 10h18v16H11q-2 0-2-2z" fill="#a9a9a9"/></svg></div>
  <div class="app"><svg viewBox="0 0 36 36"><path d="M1 17Q2 0 18.500 0 35 1 35.500 14q-.5 8-8.500 9-5 0-6-3 3-5-1-9-9-5-19 6z" fill="url(#edgeg)"/><path d="M1 17q7-9 15-5-7 6-3 15 5 8 16 5-6 5-13 4Q0 33 1 17z" fill="#1078c8"/><circle cx="9" cy="27" r="9" fill="#dfe6ea"/><circle cx="9" cy="23" r="3" fill="#7b4c38"/><path d="M2 33q1-7 7-7t7 7q-7 6-14 0z" fill="#26303e"/></svg><i></i></div>
  <div class="app"><svg viewBox="0 0 36 36"><path d="M10 7V2q0-1.500 1.500-1.500h13Q26 .500 26 2v5" fill="none" stroke="#35a8ea" stroke-width="2.200"/><rect x="1" y="5" width="34" height="31" rx="4" fill="#f0f0f0"/><path d="M10 12h7.500v7H10z" fill="#f25022"/><path d="M19 12h7v7h-7z" fill="#7fba00"/><path d="M10 20.500h7.500v7H10z" fill="#00a4ef"/><path d="M19 20.500h7v7h-7z" fill="#ffb900"/></svg><i></i></div>
  <div class="app"><svg viewBox="0 0 36 36"><circle cx="20" cy="7" r="5.500" fill="#7b83eb"/><circle cx="31" cy="8" r="4" fill="#5059c9"/><path d="M24 14h11v10q-2 8-9 6zM13 14h15v14q-1 6-8 6t-7-7z" fill="#6a72dc"/><rect x="1" y="10" width="17" height="17" rx="1.500" fill="#3d45b4"/><text x="9.500" y="23.500" class="let">T</text></svg><i></i></div>
  <div class="app"><svg viewBox="0 0 36 36"><path d="M9 13L24 3l11 9v17q0 4-4 4H12q-3 0-3-3z" fill="#1490df"/><path d="M9 13L24 3l5 4-18 14z" fill="#2db2f2"/><path d="M35 15L15 32q1 2 4 1.500h12q4 0 4-4z" fill="#42d4f7"/><rect x="0" y="10" width="17" height="17" rx="2" fill="#0f62b8"/><text x="8.500" y="23.500" class="let">O</text></svg><i></i></div>
  <div class="app"><svg viewBox="0 0 36 36"><path d="M1 5q0-3 3-3h8l4 4h17q2 0 2 2v10H1z" fill="#e8a711"/><path d="M1 9h12l3-3h17q2 0 2 2v24q0 3-3 3H1z" fill="#ffcf48"/><path d="M6 35V28q0-3 3-3h18q3 0 3 3v7z" fill="#1177cb"/><path d="M13 30h10" stroke="#0a4f92" stroke-width="1.500"/></svg><i></i></div>
  <div class="app acro"><svg viewBox="0 0 36 36"><rect x="2" y="1" width="32" height="34" rx="6" fill="#b30b00"/><path d="M9 26q8-3 10-17-3-2-2 2 2 9 10 11 3 1 2-1-8-2-20 3-2 2 0 2z" fill="none" stroke="#fff" stroke-width="2"/></svg><i></i></div>
  <div class="app"><svg viewBox="0 0 36 36"><rect x="10" y="3" width="25" height="31" rx="2" fill="#1f84d6"/><path d="M18 3h17v12H18z" fill="#3ba9ee"/><path d="M26 3h9v8h-9z" fill="#55c2f6"/><path d="M10 20l13 6 12-8v14q0 2-2 2H12q-2 0-2-2z" fill="#1a6fc4"/><rect x="0" y="9" width="18" height="18" rx="2" fill="#0e5cab"/><text x="9" y="23.500" class="let">O</text></svg><i></i></div>
  <div class="app"><svg viewBox="0 0 36 36"><path d="M26 0l9 4v28l-9 4z" fill="#27a5ee"/><path d="M26 0v9L6 26l-4-3V21zM26 36v-9L6 10l-4 3v2z" fill="#0a7bcb"/></svg><i></i></div>
  <div class="app"><svg viewBox="0 0 36 36"><path d="M2 9Q2 1 11 2q6-3 11 0 12-3 12 6 0 10-7 16 2 1 5 0-2 4-7 4-1 7-6 7-5-1-4-10-9 3-13-16z" fill="#336791" stroke="#d9e2ea" stroke-width="1.800"/><path d="M12 3Q9 8 10 14q2 5-1 9M23 3q5 6 2 13-2 3 2 7M17 11v15" fill="none" stroke="#d9e2ea" stroke-width="1.500"/></svg><i></i></div>
  <div class="app"><svg viewBox="0 0 36 36"><circle cx="18" cy="18" r="16" fill="#fff"/><path d="M14 34v-5q-5 1-6-3l-2-2q4-1 5 2 2 2 4 0 0-2 1-3-8-1-7-9 0-2 1-4-1-2 0-5 3 0 5 2 4-1 7 0 3-2 5-2 1 3 0 5 2 2 2 5 0 7-8 8 2 2 2 5v6z" fill="#222"/></svg></div>
  <div class="app"><svg viewBox="0 0 36 36"><circle cx="18" cy="18" r="18" fill="#1d91ee"/><path d="M4 18h22q0-3 2-5 2 1 2 4 2-.5 3 .5-1 3-5 3-4 9-13 9T4 18zM6 14h4v3.500H6zM10.500 14h4v3.500h-4zM15 14h4v3.500h-4zM19.500 14h4v3.500h-4zM10.500 10h4v3.500h-4zM15 10h4v3.500h-4zM15 6h4v3.500h-4z" fill="#fff"/></svg><i></i></div>
  <div class="app"><svg viewBox="0 0 36 36"><circle cx="18" cy="18" r="12" fill="#8c96a2"/><circle cx="18" cy="18" r="14.500" fill="none" stroke="#8c96a2" stroke-width="6" stroke-dasharray="8.200 6.980" stroke-dashoffset="4"/><circle cx="18" cy="18" r="7.500" fill="#e8edf2"/><circle cx="18" cy="18" r="5.800" fill="#1a62b4"/></svg><i></i></div>
  <div class="app fmetile"><svg viewBox="0 0 36 36"><use href="#fme"/></svg><i></i></div>
  <div class="app"><svg viewBox="0 0 36 36"><circle cx="17.500" cy="17" r="13" fill="none" stroke="#8db92e" stroke-width="8"/><path d="M14 13l7 1 14 20h-8L14 20z" fill="#589632"/><path d="M14 13l7 1 3 6-5 4-5-4z" fill="#ee7913"/></svg><i></i></div>
  <div class="app"><svg viewBox="0 0 36 36"><rect x="0" y="0" width="27" height="28" rx="3" fill="#f1f1f1"/><path d="M5 19V5h15v6" fill="none" stroke="#e0461b" stroke-width="4" stroke-dasharray="4.500 1.200"/><path d="M22 12v16M12 21h18" stroke="#7e8a95" stroke-width="3"/><circle cx="31" cy="20" r="4" fill="none" stroke="#1e9bea" stroke-width="2.500"/><circle cx="20" cy="31" r="4" fill="none" stroke="#1e9bea" stroke-width="2.500"/></svg><i></i></div>
  <div class="tray">
    <svg class="tc" viewBox="0 0 18 12"><path d="M1.500 10L9 2l7.500 8"/></svg>
    <svg class="od" viewBox="0 0 26 22"><path d="M6 17Q1 16 1 11q0-4 5-5 3-6 9-4 5 2 5 6l-9 9z" fill="#b5b5b5"/><circle cx="17.500" cy="14" r="7" fill="#d3282f"/><path d="M14.800 11.300l5.400 5.400M20.200 11.300l-5.400 5.400" stroke="#fff" stroke-width="1.600"/></svg>
    <div class="lang">FRA<br>CAFR</div>
    <svg class="wifi" viewBox="0 0 24 20"><path d="M1.500 7Q12-2.500 22.500 7M5 11q7-6.500 14 0M8.500 14.500q3.500-3.200 7 0"/><circle cx="12" cy="17.500" r="1.700" class="solid"/></svg>
    <svg class="vol" viewBox="0 0 26 22"><path d="M1.500 7.500h4l6-5.500v18l-6-5.500h-4zM15 7.500q2.500 3.500 0 7M18.500 5q4.500 6 0 12M21.500 2.500q7 8.500 0 17"/></svg>
    <svg class="bat" viewBox="0 0 25 16"><rect x="1" y="1" width="19" height="14" rx="3"/><path d="M22.500 5.500v5" stroke-width="2.500"/><rect x="3.500" y="3.500" width="5" height="9" class="solid"/></svg>
    <div class="clock">23:29<br>2025-03-10</div>
  </div>
</footer>
</body>
</html>
```
FILE: styles.css
```css
*{box-sizing:border-box}
body{margin:0;width:2302px;height:1534px;overflow:hidden;background:#323232;color:#f4f4ee;font:16.800px/24px "Open Sans","Noto Sans",sans-serif;display:flex;flex-direction:column;white-space:nowrap}
.defs{position:absolute}
svg{fill:none;stroke:#f4f4ee;stroke-width:2;flex:none;display:block}
.solid{fill:#f4f4ee;stroke:none}
.i18{width:19px;height:22px;stroke:none}
h3{margin:0;font-size:16.800px;font-weight:400;line-height:24px}
i,em{display:block}
b,s{display:block;text-decoration:none}

.title{height:34px;background:#202020;display:flex;align-items:center;padding-left:5px;gap:11px;font-size:17.080px}
.winctl{margin-left:auto;display:grid;grid-template-columns:69px 70px 70px;justify-items:center;align-items:center}
.winctl svg{width:16px;height:16px;stroke-width:1.400}
.menu{height:30px;background:#2a2a2a;display:grid;grid-template-columns:48.500px 53px 58px 86px 123.500px 78px 52px 64px auto;padding:1px 0 0 15px;align-items:center;border-bottom:1px solid #222}
.menu u{text-underline-offset:3px}

.toolbar{height:105px;background:#292929;display:grid;grid-template-columns:17px 62px 64px 62px 12px 50px 19px 62px 11px 64px 68px 11px 67px 54px 90px 104px 15px 60px 45px 130px 42px 72px 104px 9px 78px 71px 120px 111px 106px 9px 74px 79px 10px 240px 92px 12px;border-bottom:4px solid #333;padding-top:15px;align-items:start}
.tool{height:74px;display:flex;flex-direction:column;align-items:center;padding-top:2px;gap:6.500px;border:1px solid transparent;border-radius:3px}
.tool svg{width:36px;height:36px}
.tool.on{background:#5b5b5b;border-color:#777;box-shadow:0 0 0 1px #1d1d1d}
.tool.off{color:#555}
.tool.off svg{stroke:#7b7b7b}
.run{fill:#0a9c0a;stroke:none}
.stop{width:36px;height:36px;background:#7c7c7c;border-radius:3px}
.sep{width:3px;height:72px;background:#6c6c6c;justify-self:center;margin-top:1px}
.grip{width:7px;height:28px;margin:23px 0 0 8px;background:repeating-linear-gradient(transparent 0 2px,#292929 2px 4.700px),repeating-linear-gradient(90deg,#888 0 3px,#292929 3px 4px)}
.drop{width:12px;height:7px;background:#b5b5b0;clip-path:polygon(0 0,100% 0,50% 100%)}
.run-drop{justify-self:center;margin-top:33px}
.pct{width:54px;height:35px;border:1px solid #4a4a4a;border-radius:3px;margin:20px 0 0 6px;padding:5px 0 0 3px;background:#242424}
.pm{width:24px;height:24px;margin-top:27px;justify-self:center;stroke-width:1.600;stroke:#ddd}
.slider{width:130px;height:40px;margin-top:18px;stroke:none}
.flow{padding-left:15px}
.flow-row{display:flex;align-items:center;height:36px;margin:6px 0 3px}
.flow>span{font-size:16.950px}
.flow-ico{width:36px;height:36px;stroke:#7b7b7b}
.combo{display:flex;align-items:center;justify-content:space-between;height:35px;border:1px solid #474747;border-radius:3px;background:linear-gradient(#2b2b2b,#232323);padding:0 10px 0 7px}
.flow-combo{width:133px;margin:0 11px 0 9px}
.flow-btn{width:27px;height:29px;background:#6c6c6c;border:1px solid #888;border-radius:2px;display:grid;place-items:center}
.more{font-size:24px;font-weight:600;color:#ddd;align-self:center;text-align:center;justify-self:center;line-height:20px;margin-top:-12px}

.work{height:611px;display:grid;grid-template-columns:175px 1616px 508px;column-gap:1px;background:#000}
.work>*{background:#323232}
.mid{margin-left:1px;width:1616px}
.right{margin-left:1px}
.left{display:flex;flex-direction:column;gap:2px;background:#000!important}
.dock{background:#323232}
.one{height:231px}
.two{height:378px}
.dockbar{display:flex;border-bottom:1px solid #727272;height:33px;align-items:stretch}
.dtab{background:#545454;width:50px;display:flex;align-items:center;padding-left:2px;color:#f0f0ea;border-right:1px solid #777}
.dtab span{line-height:20px}
.left .dtab .x{margin:0 11px 0 auto}
.left .two .dtab .x{margin-right:14px}
.left .dtab span{width:13px;overflow:visible;letter-spacing:-.2px}
.x{width:12px;height:12px;stroke-width:1.500}
.r{width:14px;height:14px;stroke-width:1.400}
.p{width:12px;height:18px;stroke-width:1.500}
.acts{display:grid;grid-template-columns:30px 32px 33px 28px;align-items:center;justify-items:center;margin-left:auto;height:30px}
.acts .drop{background:#f4f4ee;height:6px}
.left .acts{margin-right:2px}
.treebox{margin:4px 0 0 5px;width:166px;height:189px;display:grid;grid-template:169px 20px/146px 20px;background:#2e2e2e}
.tree{background:#282828;overflow:hidden;padding-top:2px}
.tree>div{height:27px;display:grid;grid-template-columns:34px 33px auto;align-items:center}
.tree>div.sel{background:#4f4f4f}
.tree .sel svg{stroke:#9cc6de}
.tree svg{width:25px;height:24px;stroke-width:2.400}
.exp{width:7px;height:11px;background:#aeaea8;clip-path:polygon(0 0,100% 50%,0 100%);margin-left:12px}
.tree i:not(.exp){width:1px}
.gallery{margin:4px 0 0 5px;width:166px;height:298px}
.gsearch{display:flex;align-items:center;margin:4px 0 0 3px;gap:8px}
.field{display:flex;align-items:center;border:1px solid #505050;border-radius:3px;background:#282828}
.gsearch .field{width:131px;height:36px}
.field .drop{margin-left:auto;margin-right:11px}
.mag{width:25px;height:25px;margin-left:12px;stroke-width:2.500}
.ref{width:25px;height:22px}

.vsb,.hsb{background:#515151;display:flex}
.vsb{flex-direction:column}
.vsb b,.hsb b{background:#666;border:1px solid #7c7c7c;display:grid;place-items:center;flex:none}
.vsb b{height:19px}
.hsb b{width:20px}
.vsb b::before,.hsb b::before{content:"";width:12px;height:7px;background:#c8c8c2}
.up::before{clip-path:polygon(50% 0,100% 100%,0 100%)}
.down::before{clip-path:polygon(0 0,100% 0,50% 100%)}
.hsb b::before{width:7px;height:11px}
.lt::before{clip-path:polygon(100% 0,100% 100%,0 50%)}
.rt::before{clip-path:polygon(0 0,100% 50%,0 100%)}
.vsb s,.hsb s{background:#686868;border:1px solid #858585;outline:1px solid #333}
.vsb .down{margin-top:auto}
.hsb .rt{margin-left:auto}
.s1 b{height:20px}.s1 s{margin-top:11px;height:40px}
.h1 b{width:18px}.h1 s{margin-left:2px;width:99px}
.h1{width:146px}
.s2 s{margin-top:2px;height:41px}
.h2 s{margin-left:65px;width:539px}

.tabs{height:41px;border-top:2px solid #727272;border-bottom:2px solid #5c5c5c;display:flex;align-items:flex-end;padding-left:2px;gap:2px;background:#303030}
.tab{display:flex;align-items:center;border:1px solid #505050;border-bottom:0;border-radius:3px 3px 0 0;padding-left:15px}
.tab .x{margin-left:auto}
.start{width:107px;height:33px;padding:4px 24px 0 15px}
.cur{width:110px;background:#666;border-color:#808080;padding:2px 23px 0 16px;margin-bottom:-1px;height:37px}
.cwrap{display:grid;grid-template:544px 21px/1585px 22px;margin:0 4px 0 3px;width:1609px;border:1px solid #4a4a4a;border-top:0;border-left-width:2px;height:566px}
.s2{margin-top:1px}
.canvas{background:#232323;position:relative}
.bm{position:absolute;left:88px;top:111px;width:555px;height:204px;background:#1c2039;border:1px solid #03126e;border-radius:9px;overflow:hidden;font-weight:600;font-size:16.300px}
.bmh{background:#001aa0;height:27px;display:flex;align-items:center;padding:1px 0 0 13px;gap:12px}
.bmh svg{width:12px;height:10px}
.node{position:absolute;left:37px;top:62px;width:457px;height:30px;background:#a65729;border:1px solid #c06a35;border-radius:5px;display:flex;align-items:center}
.nico{background:#6b3518;width:32px;height:27px;display:grid;place-items:center;border-radius:4px 0 0 4px}
.nico svg{width:25px;height:23px;stroke-width:1.600}
.chev{width:12px;height:10px;margin:0 9px 0 6px}
.nname{width:370px;font-size:16.650px;flex:none}
.port{width:13px;height:16px;stroke-width:1.500;margin-left:7px}

.right .dtab{width:209px;padding-left:12px;gap:13px}
.right .acts,.preview .acts{grid-template-columns:32px 32px 31px 30px;height:30px}
.right .acts .x,.preview .acts .x{margin-left:3px}
.fsel{display:flex;align-items:center;height:60px;padding:5px 0 0 14px}
.fbox{width:27px;height:32px;border:1px solid #222;border-radius:3px;background:#2d2d2d;color:#555;padding:3px 8px;margin:0 9px 0 10px}
.fsel .exp{background:#777;height:12px;margin-left:30px}
.fsel .back{margin-left:17px;transform:scaleX(-1)}
.fsel span:nth-of-type(2){width:37px}
.props{display:grid;grid-template:29px 429px/459px 21px;margin-left:15px}
.phead{background:linear-gradient(#4c4c4c,#404040);display:grid;grid-template-columns:186px 43px auto;align-items:center;border-bottom:1px solid #222;padding-top:2px}
.phead span{border-left:1px solid #6a6a6a;padding-left:4px}
.phead span:first-child{border:0}
.pk{display:flex;align-items:center;gap:1px;padding-left:8px!important}
.pk svg{width:21px;height:16px;stroke-width:4}
.pbody{background:#282828}
.s3{grid-area:1/2/3/3}
.s3 s{height:417px}
.fsearch{display:flex;align-items:center;margin:10px 0 0 14px}
.fsearch .field{width:288px;height:36px;background:#323232}
.fsearch .mag{stroke:#999}
.fsearch .drop{background:#4c4c4c}
.fsearch span{margin:0 10px 0 8px;width:15px}
.fsearch .any{width:129px;height:36px;color:#555;background:#333;padding-right:11px}

.preview{border-top:1px solid #000}
.preview .dtab{width:164px;padding-left:12px;gap:13px}
.dtab2{width:147px;padding:4px 0 0 12px;border-right:1px solid #777}
.pv{display:grid;grid-template-columns:58px 1318px 6px 920px;height:607px}
.side{display:flex;flex-direction:column;align-items:center;padding-top:10px;width:48px}
.side svg{width:24px;height:24px}
.dash{width:18px;height:3px;background:#777;margin:11px 6px 9px 0}
.sbtn{width:34px;height:32px;background:#585858;border:1px solid #777;border-radius:3px;display:grid;place-items:center;margin-top:4px;outline:1px solid #222}
.side svg+.sbtn{margin-top:8px}
.side .sbtn+.dash{margin-top:6px}
h3{padding-top:3px;height:30px}
.gbox{margin-left:2px;width:1316px;height:574px;border:2px solid #3b3b3b;border-radius:3px;padding:10px 0 0 8px}
.urlrow{display:flex;gap:11px}
.url{width:1164px;height:34px;padding-left:2px;font-size:17.150px}
.url span{width:1127px;overflow:hidden;display:flex;justify-content:flex-end}
.url .drop{margin-right:11px}
.btn{width:118px;height:34px;background:linear-gradient(#727272,#646464);border:1px solid #8a8a8a;border-radius:2px;text-align:center;line-height:32px;outline:1px solid #252525;color:#dededa}
.grid{display:grid;grid-template:438px 21px/1270px 22px;margin:11px 0 0 1px;width:1292px;background:#2a2a2a}
.rows{overflow:hidden;background:#282828}
.row{height:30px;display:grid;grid-template-columns:27px 94px 150px 150px 219px 150px 180px 150px 150px}
.row span{border-right:1px solid #626262;border-bottom:1px solid #626262;padding:3.500px 5px 0;overflow:hidden}
.row b{background:#4b4b4b;font-weight:700;border-bottom:2px solid #222;border-right:1px solid #777;padding:4px 0 0 2px;border-top:1px solid #606060;line-height:23px}
.row:nth-child(even){background:#323232}
.row span:nth-child(4),.row span:nth-child(5),.row span:nth-child(8){text-align:right}
.row:not(.hd) span:nth-child(5){color:#5a5a5a;padding-right:6px}
.row:not(.hd) span:nth-child(8){padding-right:6px}
.row.hd{height:29px;background:linear-gradient(#4d4d4d,#424242);font-weight:700}
.hd span{border-bottom:1px solid #222;text-align:left!important;padding-left:3px;border-right:2px solid #666}
.hd span:nth-child(1){border-right:0}
.hd span:nth-child(2){padding-left:0}
.s4 s{margin-top:153px;height:152px}
.hsb.h4{margin-top:1px}
.h4 b{width:19px}.h4 s{margin-left:155px;width:1075px}
.h4 .rt{width:21px}
.tsearch{display:flex;align-items:center;margin-top:12px}
.tsearch .field{width:304px;height:35px;color:#999}
.tsearch .field .mag{margin:0 6px 0 13px}
.tsearch>span{width:14px;margin:0 10px}
.tsearch .combo{width:304px}
.split{width:4px;height:26px;margin:294px 0 0 2px;background:repeating-linear-gradient(#777 0 3px,#323232 3px 4.700px)}
.gbox2{margin-left:2px;width:920px;height:574px;border:2px solid #3b3b3b;border-right:0;border-radius:3px;padding:14px 0 0 12px}
.gtools{display:grid;grid-template-columns:41px 48px 101px 16px 56px 6px 67px 56px 86px 108px 10px 142px 132px 28px;height:70px}
.gtools .tool{height:62px;padding-top:1px;gap:6px}
.gtools .tool svg{width:25px;height:25px;stroke-width:2.500}
.gtools .sep{height:46px;margin-top:7px;width:2px}
.gtools .more{margin-top:-14px}
.map{width:896px;height:429px;border:3px solid #555;border-top-color:#4a4a4a;margin-left:-3px;position:relative;overflow:hidden}
.map svg{width:890px;height:423px}
.base *{vector-effect:non-scaling-stroke}
.urban{fill:#ececE6;stroke:none}
.water{fill:#c1cacd;stroke:none}
.wl{fill:none;stroke:#c1cacd;stroke-width:4}
.stream{stroke:#c6d4d8;stroke-width:1.400}
.road{stroke:#e0e0de;stroke-width:2.500}
.minor{stroke:#e6e6e2;stroke-width:1}
.isl{fill:rgba(212,169,249,.340);stroke:#5b4373;stroke-width:1.400}
.bor{stroke:#5b4373;stroke-width:1.300}
.labels{position:absolute;left:0;top:0;stroke:none;text-anchor:middle;font-family:Roboto,sans-serif;fill:#7a849c}
.town{font-size:9.600px}
.city{font-size:12px;fill:#77829b}
.lake{font-size:14px;font-style:italic;letter-spacing:1.500px;fill:#929da4}
.shield{font-size:8px;fill:#333}
.shield path{fill:#fafafa;stroke:#666;stroke-width:1.200}
.attr{position:absolute;left:6px;top:370px;width:533px;height:39px;background:rgba(60,60,60,.830);padding:8px 0 0 8px;font-size:17.230px}
.attr u{color:#2f97f2;text-underline-offset:3px}
.coords{display:grid;grid-template-columns:30px 116px 28px 120px 265px auto;align-items:center;margin:10px 0 0 270px}
.coords>span:last-child{padding-left:9px}
.status{height:45px;border-top:2px solid #3a3a3a;border-bottom:2px solid #454545;flex:none}

.taskbar{height:68px;background:#212121;display:flex;align-items:stretch}
.weather{width:340px;position:relative;padding:20px 0 0 28px}
.weather svg{width:39px;height:32px;stroke:none}
.weather span{position:absolute;left:43px;top:8px;width:35px;height:25px;border-radius:12px;background:#2e2e2e;font-size:15.500px;text-align:center}
.app{width:66px;display:flex;flex-direction:column;align-items:center;padding-top:16px;position:relative}
.app svg{width:36px;height:36px;stroke:none}
.app i{position:absolute;bottom:5px;width:9px;height:5px;border-radius:3px;background:#9a9a9a}
.let{fill:#fff;font-size:14px;font-weight:700;text-anchor:middle}
.gapl{margin-left:3px}
.search{width:330px;height:48px;border-radius:24px;background:#414141;border:1px solid #555;margin:10px 0 0 5px;display:flex;align-items:center;padding-left:17px;font-size:18.500px;color:#d8d8d8}
.sm{width:23px;height:25px;margin-right:15px;stroke:#ddd}
.search span{width:200px}
.pipes{width:66px;height:38px;stroke:none}
.acro,.fmetile{width:60px;margin:4px 3px 5px;background:#7e3d43;border-radius:6px;padding-top:12px}
.acro i{background:#ff9aa0;bottom:0}
.fmetile{background:#323232;border:1px solid #3d3d3d;padding-top:11px}
.fmetile i{width:24px;bottom:0;background:#bbb}
.tray{display:flex;align-items:center;margin-left:102px;font-size:17.500px;line-height:24px;flex:1}
.tc{width:18px;height:12px;margin-right:25px}
.od{width:26px;height:22px;stroke:none}
.lang{width:60px;text-align:center;margin-left:16px}
.wifi{width:24px;height:20px;margin-left:13px}
.vol{width:26px;height:22px;margin:0 12px;stroke-width:1.600}
.bat{width:25px;height:16px;stroke-width:1.600}
.clock{margin-left:auto;margin-right:28px;text-align:right}
```
